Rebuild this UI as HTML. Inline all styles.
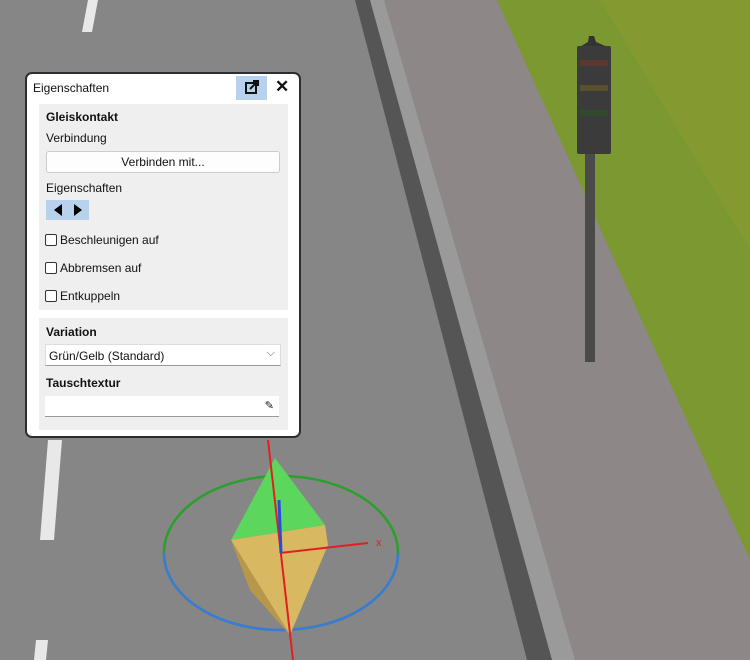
<!DOCTYPE html><html><head><meta charset="utf-8"><style>
body{margin:0;width:750px;height:660px;overflow:hidden;position:relative;font-family:"Liberation Sans",sans-serif;background:#848484}
svg.bg{position:absolute;left:0;top:0}
.panel{position:absolute;left:25px;top:72px;width:272px;height:362px;background:#fff;border:2px solid #2a2e33;border-radius:7px;font-size:12px;color:#111}
.t{position:absolute;left:6px;top:7px}
.pop{position:absolute;left:209px;top:2px;width:31px;height:24px;background:#b8d2ee}
.x{position:absolute;left:248px;top:3px;font-size:17px;font-weight:bold}
.sec{position:absolute;left:12px;width:249px;background:#efefef}
.b{font-weight:bold}
.a{position:absolute;left:7px}
.btn{position:absolute;left:7px;width:232px;height:20px;background:#fdfdfd;border:1px solid #ccc;border-radius:3px;text-align:center;line-height:20px}
.cb{position:absolute;left:6px;width:10px;height:10px;border:1px solid #333;border-radius:2px;background:#fff}
.in{position:absolute;left:6px;width:234px;height:20px;background:#fff;border-bottom:1px solid #999}
</style></head><body>
<svg class="bg" width="750" height="660">
<rect width="750" height="660" fill="#868686"/>
<polygon points="355,0 372,0 555,660 527,660" fill="#555"/>
<polygon points="370,0 384,0 575,660 552,660" fill="#9a9a9a"/>
<polygon points="384,0 497,0 750,560 750,660 575,660" fill="#8e8787"/>
<polygon points="497,0 750,0 750,560" fill="#7c9830"/>
<polygon points="600,0 750,0 750,250" fill="#8a9a2e" opacity=".6"/>
<polygon points="88,0 98,0 92,32 82,32" fill="#e8e8e8"/>
<polygon points="48,440 62,440 54,540 40,540" fill="#e8e8e8"/>
<polygon points="36,640 48,640 46,660 34,660" fill="#e8e8e8"/>
<rect x="585" y="150" width="10" height="212" fill="#4a4a4a"/>
<polygon points="589,36 594,36 596,42 610,48 578,48 588,42" fill="#333"/>
<rect x="577" y="46" width="34" height="108" rx="2" fill="#3b3b3b"/>
<rect x="580" y="60" width="28" height="6" fill="#5a3a30"/><rect x="580" y="85" width="28" height="6" fill="#5a5030"/><rect x="580" y="110" width="28" height="6" fill="#304a30"/>
<ellipse cx="281" cy="553" rx="117" ry="77" fill="none" stroke="#2aa02a" stroke-width="2.5"/>
<path d="M164,553 A117,77 0 0 0 398,553" fill="none" stroke="#3a7ad8" stroke-width="2.5"/>
<polygon points="275,458 325,525 231,540" fill="#5cd65c"/>
<polygon points="231,540 325,525 328,545 290,635" fill="#d8b860"/>
<polygon points="231,540 290,635 250,590" fill="#b89848"/>
<line x1="268" y1="440" x2="293" y2="660" stroke="#e02020" stroke-width="2"/>
<line x1="280" y1="553" x2="368" y2="543" stroke="#e02020" stroke-width="2"/>
<line x1="279" y1="500" x2="281" y2="553" stroke="#2050e0" stroke-width="3"/>
<text x="376" y="546" fill="#e02020" font-size="11" font-family="Liberation Sans">x</text>
</svg>
<div class="panel">
<div class="t">Eigenschaften</div>
<div class="pop"><svg width="31" height="24"><rect x="10" y="7" width="10" height="10" fill="none" stroke="#111" stroke-width="2"/><path d="M14,13 L22,5 M17,5 H22 V10" stroke="#111" stroke-width="2" fill="none"/></svg></div>
<div class="x">✕</div>
<div class="sec" style="top:30px;height:206px">
<div class="a b" style="top:6px">Gleiskontakt</div>
<div class="a" style="top:27px">Verbindung</div>
<div class="btn" style="top:47px">Verbinden mit...</div>
<div class="a" style="top:77px">Eigenschaften</div>
<div style="position:absolute;left:7px;top:96px;width:43px;height:20px;background:#b8d2ee"><svg width="43" height="20"><polygon points="8,10 16,4 16,16" fill="#000"/><polygon points="36,10 28,4 28,16" fill="#000"/></svg></div>
<div class="cb" style="top:130px"></div><div class="a" style="left:21px;top:129px">Beschleunigen auf</div>
<div class="cb" style="top:158px"></div><div class="a" style="left:21px;top:157px">Abbremsen auf</div>
<div class="cb" style="top:186px"></div><div class="a" style="left:21px;top:185px">Entkuppeln</div>
</div>
<div class="sec" style="top:244px;height:112px">
<div class="a b" style="top:7px">Variation</div>
<div class="in" style="top:26px;border:1px solid #ddd;border-bottom:1px solid #999"><span style="position:absolute;left:3px;top:4px">Grün/Gelb (Standard)</span><span style="position:absolute;right:5px;top:2px;color:#666;font-size:11px">⌵</span></div>
<div class="a b" style="top:58px">Tauschtextur</div>
<div class="in" style="top:78px"><span style="position:absolute;right:5px;top:3px;font-size:11px">✎</span></div>
</div>
</div>
</body></html>
